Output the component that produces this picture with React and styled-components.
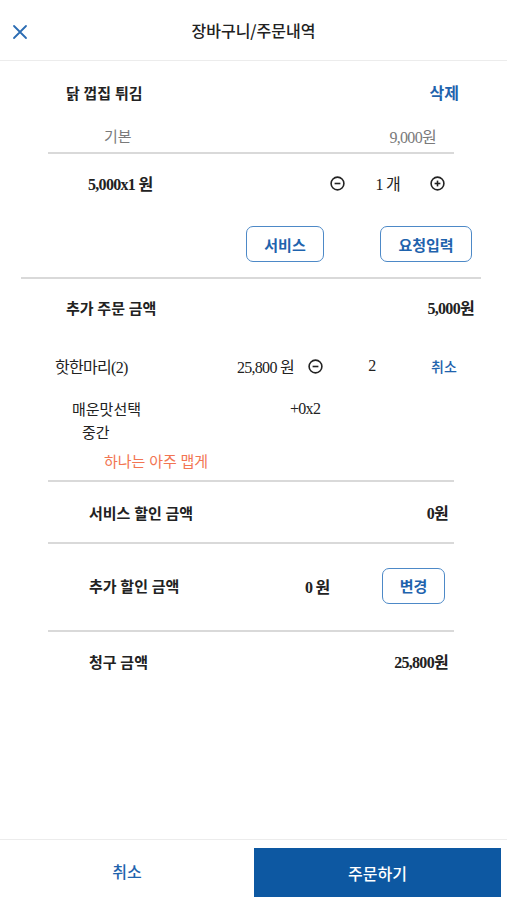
import React from 'react'
import styled, { createGlobalStyle } from 'styled-components';

const GlobalStyle = createGlobalStyle`
html, body {
  margin: 0;
  padding: 0;
  background: #ffffff;
}
body {
  font-family: "Liberation Serif", "Noto Sans CJK KR", serif;
  color: #222;
}
`;

const Page = styled.div`
display: flex;
flex-direction: column;
min-height: 100vh;
`;

const Header = styled.header`
display: flex;
align-items: center;
justify-content: center;
position: relative;
height: 60px;
border-bottom: 1px solid #ececec;
`;

const CloseButton = styled.button`
position: absolute;
left: 11px;
top: 23px;
width: 18px;
height: 18px;
padding: 0;
border: none;
background: none;
display: flex;
`;

const Title = styled.h1`
margin: 0;
font-family: "Noto Sans CJK KR", sans-serif;
font-size: 16px;
font-weight: 500;
color: #222;
`;

const Main = styled.main`
flex: 1;
`;

const Row = styled.div`
display: flex;
align-items: center;
height: ${p => p.h}px;
padding: ${p => p.pt || 0}px ${p => p.r || 0}px ${p => p.pb || 0}px ${p => p.l || 0}px;
justify-content: ${p => p.between ? 'space-between' : 'flex-start'};
box-sizing: border-box;
`;

const Divider = styled.hr`
margin: 0 ${p => p.r}px 0 ${p => p.l}px;
border: none;
height: 2px;
background: #d9d9d9;
`;

const Label = styled.span`
font-size: 15px;
font-weight: ${p => p.bold ? 700 : 400};
color: ${p => p.color || '#222'};
white-space: nowrap;
`;

const Amount = styled.span`
font-size: 16px;
font-weight: ${p => p.bold ? 700 : 400};
color: ${p => p.color || '#222'};
letter-spacing: -0.7px;
white-space: nowrap;
`;

const Cell = styled.div`
width: ${p => p.w}px;
flex: none;
display: flex;
align-items: center;
justify-content: ${p => p.align || 'flex-start'};
margin-left: ${p => p.ml || 0}px;
`;

const TextLink = styled.button`
border: none;
background: none;
padding: 0;
font-family: "Noto Sans CJK KR", sans-serif;
font-size: ${p => p.size || 14}px;
font-weight: ${p => p.bold ? 700 : 500};
color: #1f63ad;
`;

const Stepper = styled.div`
display: flex;
align-items: center;
gap: 30px;
`;

const OutlineButton = styled.button`
height: 36px;
width: ${p => p.w}px;
border: 1.5px solid #4d89c7;
border-radius: 7px;
background: #fff;
font-family: "Noto Sans CJK KR", sans-serif;
font-size: 15px;
font-weight: 700;
color: #1f63ad;
padding: 0;
box-sizing: border-box;
`;

const ButtonRow = styled.div`
display: flex;
justify-content: flex-end;
gap: 56px;
padding: 14px 35px 15px 0;
`;

const Footer = styled.footer`
display: flex;
height: 61px;
border-top: 1px solid #ececec;
box-sizing: border-box;
padding: 8px 6px 3px 0;
`;

const CancelButton = styled.button`
flex: 1;
border: none;
background: none;
font-family: "Noto Sans CJK KR", sans-serif;
font-size: 16px;
font-weight: 500;
color: #1f63ad;
padding: 0 0 4px;
`;

const OrderButton = styled.button`
width: 247px;
height: 49px;
border: none;
background: #0d58a2;
color: #fff;
font-family: "Noto Sans CJK KR", sans-serif;
font-size: 16px;
font-weight: 500;
`;

const CircleIcon = ({ plus }) => (
    <svg width="15" height="15" viewBox="0 0 15 15">
        <circle cx="7.5" cy="7.5" r="6.4" fill="none" stroke="#222" strokeWidth="1.6" />
        <line x1="4.6" y1="7.5" x2="10.4" y2="7.5" stroke="#222" strokeWidth="1.6" />
        {plus && <line x1="7.5" y1="4.6" x2="7.5" y2="10.4" stroke="#222" strokeWidth="1.6" />}
    </svg>
);

function App() {
    return (
        <>
            <GlobalStyle />
            <Page>
                <Header>
                    <CloseButton aria-label="닫기">
                        <svg width="18" height="18" viewBox="0 0 18 18">
                            <path d="M3 3 L15 15 M15 3 L3 15" stroke="#2b6cb3" strokeWidth="1.8" strokeLinecap="round" />
                        </svg>
                    </CloseButton>
                    <Title>장바구니/주문내역</Title>
                </Header>

                <Main>
                    <Row h={62} l={66} r={48} between>
                        <Label bold>닭 껍집 튀김</Label>
                        <TextLink size={16} bold>삭제</TextLink>
                    </Row>
                    <Row h={29} l={104} r={71} pb={4} between>
                        <Label color="#7a7a7a">기본</Label>
                        <Amount color="#7a7a7a">9,000원</Amount>
                    </Row>
                    <Divider l={48} r={53} />
                    <Row h={58} l={88} r={62} between>
                        <Amount bold>5,000x1 원</Amount>
                        <Stepper>
                            <CircleIcon />
                            <Amount>1 개</Amount>
                            <CircleIcon plus />
                        </Stepper>
                    </Row>
                    <ButtonRow>
                        <OutlineButton w={78}>서비스</OutlineButton>
                        <OutlineButton w={92}>요청입력</OutlineButton>
                    </ButtonRow>
                    <Divider l={21} r={26} />

                    <Row h={56} l={66} r={33} between>
                        <Label bold>추가 주문 금액</Label>
                        <Amount bold>5,000원</Amount>
                    </Row>
                    <Row h={62} l={55}>
                        <Cell w={140}><Amount>핫한마리(2)</Amount></Cell>
                        <Cell w={99} align="flex-end"><Amount>25,800 원</Amount></Cell>
                        <Cell w={15} ml={14}><CircleIcon /></Cell>
                        <Cell w={98} align="center"><Amount>2</Amount></Cell>
                        <Cell w={40} ml={10}><TextLink>취소</TextLink></Cell>
                    </Row>
                    <Row h={23} l={72}>
                        <Cell w={218}><Label>매운맛선택</Label></Cell>
                        <Amount>+0x2</Amount>
                    </Row>
                    <Row h={23} l={82}>
                        <Label>중간</Label>
                    </Row>
                    <Row h={37} l={104} pt={6} pb={9}>
                        <Label color="#f27552">하나는 아주 맵게</Label>
                    </Row>
                    <Divider l={48} r={53} />

                    <Row h={60} l={89} r={59} between>
                        <Label bold>서비스 할인 금액</Label>
                        <Amount bold>0원</Amount>
                    </Row>
                    <Divider l={48} r={53} />
                    <Row h={86} l={89} pb={3}>
                        <Cell w={216}><Label bold>추가 할인 금액</Label></Cell>
                        <Cell w={77}><Amount bold>0 원</Amount></Cell>
                        <OutlineButton w={63}>변경</OutlineButton>
                    </Row>
                    <Divider l={48} r={53} />
                    <Row h={58} l={89} r={59} between>
                        <Label bold>청구 금액</Label>
                        <Amount bold>25,800원</Amount>
                    </Row>
                </Main>

                <Footer>
                    <CancelButton>취소</CancelButton>
                    <OrderButton>주문하기</OrderButton>
                </Footer>
            </Page>
        </>
    )
}

export default App
